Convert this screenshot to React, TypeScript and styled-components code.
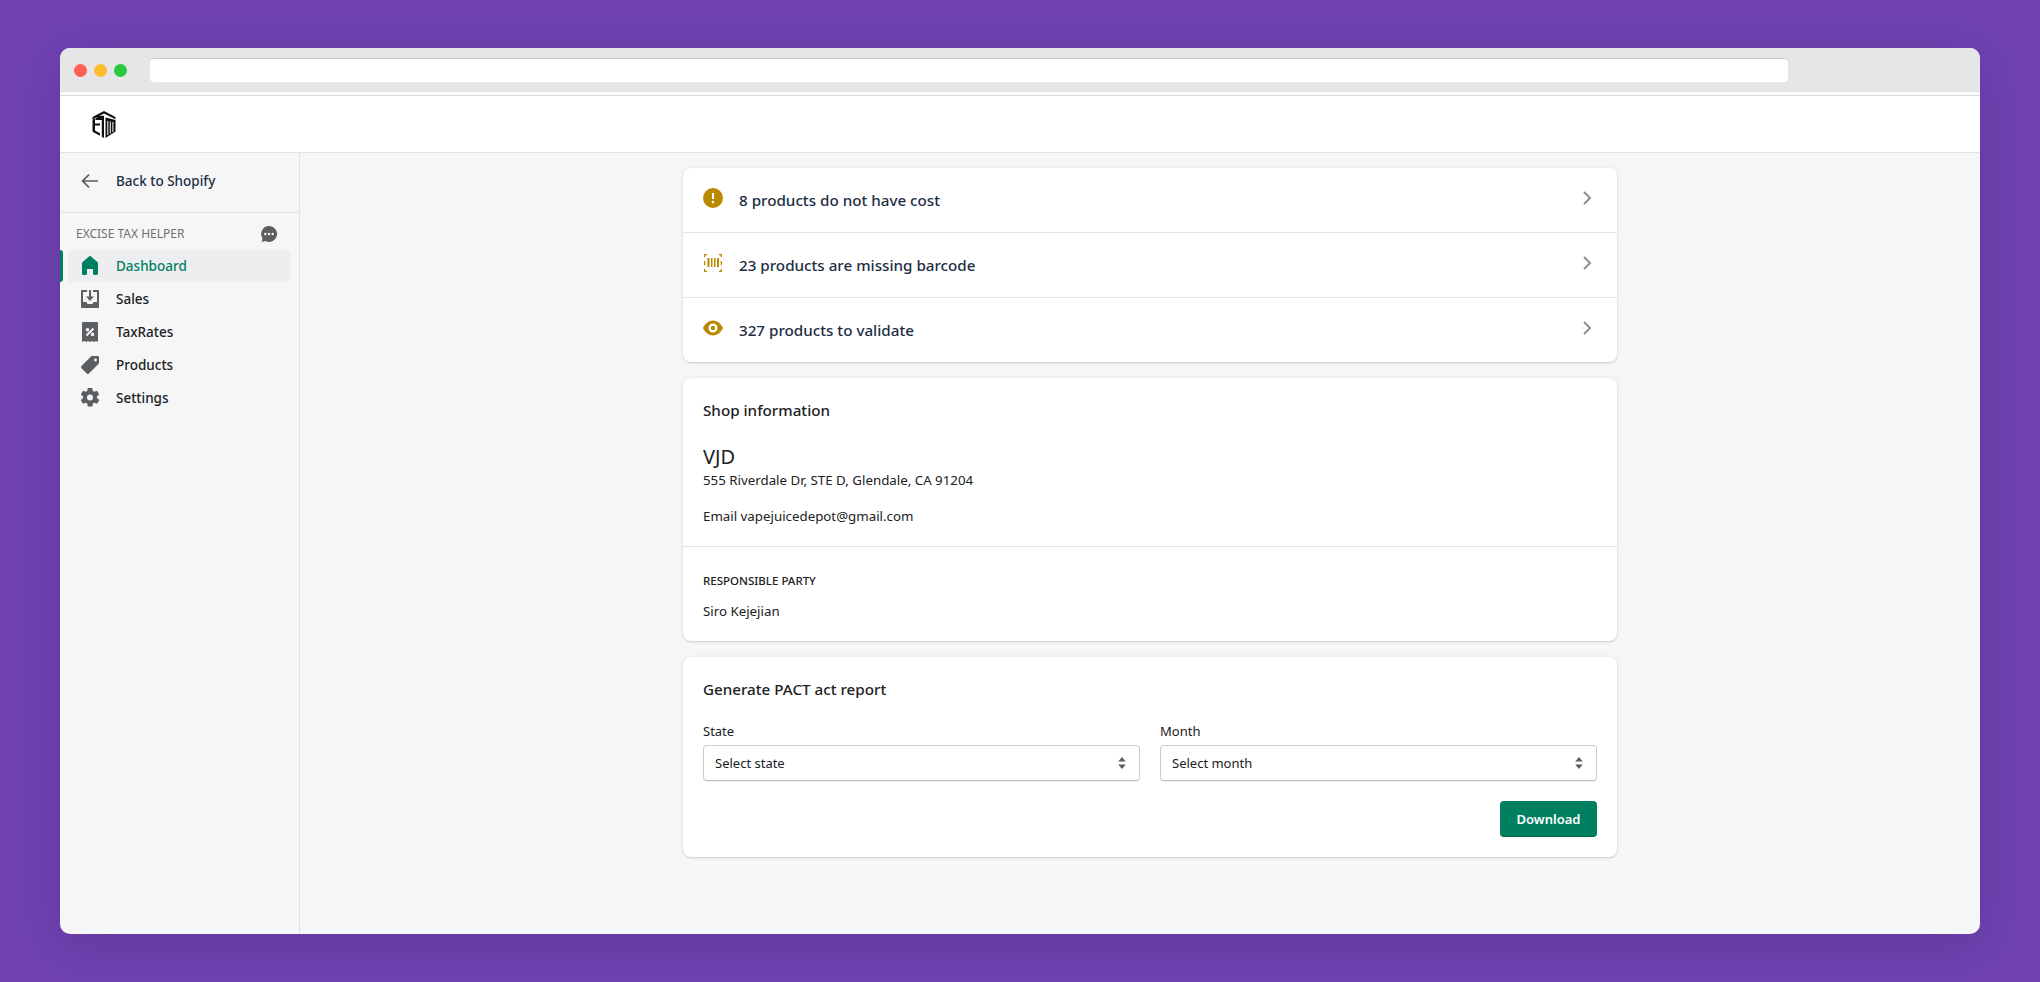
import React from "react";
import styled, { createGlobalStyle } from "styled-components";

const GlobalStyle = createGlobalStyle`
  * { box-sizing: border-box; }
  html, body { margin: 0; height: 100%; }
  body {
    background: #7043b1;
    font-family: "Noto Sans", "Open Sans", sans-serif;
    color: #212b36;
    overflow: hidden;
  }
`;

const Page = styled.div`
  height: 982px;
  padding: 48px 60px;
`;

const Browser = styled.div`
  height: 886px;
  border-radius: 10px;
  overflow: hidden;
  background: #f6f6f7;
  display: flex;
  flex-direction: column;
  box-shadow: 0 10px 50px rgba(40, 20, 80, 0.22);
`;

const ChromeBar = styled.div`
  height: 44px;
  flex-shrink: 0;
  background: #e6e6e6;
  display: flex;
  align-items: center;
  padding: 0 13px 0 14px;
`;

const Dots = styled.div`
  display: flex;
  gap: 7px;
  margin-right: 23px;
`;

const Dot = styled.span<{ $color: string }>`
  width: 13px;
  height: 13px;
  border-radius: 50%;
  background: ${(p) => p.$color};
`;

const Address = styled.div`
  width: 1638px;
  height: 24px;
  margin-top: -1px;
  background: #fff;
  border-radius: 4px;
  border-top: 1px solid #c9c9c9;
`;

const TopBar = styled.header`
  height: 61px;
  flex-shrink: 0;
  background: #fff;
  padding-top: 5px;
  padding-left: 32px;
  display: flex;
  align-items: center;
  border-bottom: 1px solid #dfe3e8;
  position: relative;
  &::before {
    content: "";
    position: absolute;
    left: 0;
    right: 0;
    top: 3px;
    height: 1px;
    background: #dcdcdc;
  }
`;

const Body = styled.div`
  flex: 1;
  display: flex;
  min-height: 0;
`;

const Sidebar = styled.nav`
  width: 240px;
  flex-shrink: 0;
  border-right: 1px solid #dfe3e8;
`;

const BackRow = styled.div`
  height: 60px;
  display: flex;
  align-items: center;
  padding: 0 0 4px 20px;
  gap: 16px;
  border-bottom: 1px solid #dfe3e8;
  font-size: 13.5px;
  font-weight: 500;
  color: #202e44;
`;

const SectionHead = styled.div`
  display: flex;
  align-items: center;
  justify-content: space-between;
  height: 21px;
  margin: 10px 0 6px;
  padding: 0 21px 0 16px;
  font-size: 12px;
  color: #6d7175;
  text-transform: uppercase;
`;

const NavList = styled.ul`
  list-style: none;
  margin: 0;
  padding: 0;
  display: flex;
  flex-direction: column;
  gap: 1px;
`;

const NavItem = styled.li<{ $active?: boolean }>`
  position: relative;
  height: 32px;
  margin: 0 8px;
  padding-left: 12px;
  gap: 16px;
  display: flex;
  align-items: center;
  border-radius: 3px;
  font-size: 13.5px;
  font-weight: 500;
  color: ${(p) => (p.$active ? "#008060" : "#202123")};
  background: ${(p) => (p.$active ? "#edeef0" : "transparent")};
  svg {
    flex-shrink: 0;
    fill: ${(p) => (p.$active ? "#008060" : "#5c5f62")};
  }
  &::before {
    content: "";
    display: ${(p) => (p.$active ? "block" : "none")};
    position: absolute;
    left: -8px;
    top: 0;
    width: 3px;
    height: 32px;
    background: #008060;
    border-radius: 0 3px 3px 0;
  }
`;

const Main = styled.main`
  flex: 1;
  padding: 15px 0 0 20px;
  display: flex;
  flex-direction: column;
  align-items: center;
  gap: 16px;
`;

const Card = styled.section`
  width: 934px;
  background: #fff;
  border-radius: 8px;
  box-shadow: 0 0 5px rgba(23, 24, 24, 0.05), 0 1px 2px rgba(0, 0, 0, 0.15);
`;

const IssueRow = styled.div`
  height: 64px;
  display: flex;
  align-items: center;
  padding: 0 20px;
  gap: 16px;
  font-size: 15.2px;
  font-weight: 500;
  color: #202e44;
  & + & {
    height: 65px;
    border-top: 1px solid #e1e3e5;
  }
  > svg:first-child {
    fill: #b98900;
    margin-top: -5px;
    flex-shrink: 0;
  }
`;

const IssueText = styled.span`
  flex: 1;
`;

const Chevron = styled.svg`
  fill: none;
  stroke: #8c9196;
  stroke-width: 2;
  margin-top: -4px;
`;

const Section = styled.div<{ $divided?: boolean }>`
  padding: 20px;
  border-top: ${(p) => (p.$divided ? "1px solid #e1e3e5" : "none")};
`;

const CardTitle = styled.h2`
  margin: 0;
  font-size: 15.2px;
  font-weight: 500;
  line-height: 24px;
  color: #202123;
`;

const ShopName = styled.div`
  margin-top: 22px;
  font-size: 20px;
  line-height: 26px;
  color: #202123;
`;

const Line = styled.p<{ $gap?: number }>`
  margin: ${(p) => p.$gap ?? 0}px 0 0;
  font-size: 13.3px;
  line-height: 20px;
  color: #202123;
`;

const Subheading = styled.h3`
  margin: 6px 0 12px;
  font-size: 11.5px;
  line-height: 16px;
  font-weight: 500;
  color: #202123;
  text-transform: uppercase;
`;

const FieldGrid = styled.div`
  display: grid;
  grid-template-columns: 1fr 1fr;
  gap: 20px;
  margin-top: 20px;
`;

const Field = styled.div`
  display: flex;
  flex-direction: column;
  gap: 4px;
`;

const FieldLabel = styled.label`
  font-size: 13px;
  line-height: 20px;
  color: #202123;
`;

const SelectBox = styled.div`
  height: 36px;
  display: flex;
  align-items: center;
  justify-content: space-between;
  padding: 0 11px 0 11px;
  border: 1px solid #c4cdd5;
  border-bottom-color: #babfc3;
  border-radius: 4px;
  font-size: 13px;
  color: #202123;
  box-shadow: 0 1px 0 rgba(0, 0, 0, 0.05);
  svg {
    fill: #5c5f62;
  }
`;

const Actions = styled.div`
  display: flex;
  justify-content: flex-end;
  margin-top: 20px;
`;

const PrimaryButton = styled.button`
  width: 97px;
  height: 36px;
  border: 0;
  border-bottom: 1px solid #006e52;
  border-radius: 4px;
  background: #008060;
  color: #fff;
  font-family: inherit;
  font-size: 13px;
  font-weight: 600;
`;

const Logo = () => (
  <svg width="24" height="28" viewBox="0 0 24 28" fill="#111">
    <path d="M12 0 23.500 6v2.200L12 2.600.5 8.200V6z" />
    <path d="M.5 8.500 3 7.300v5.200h5v2H3V19.600l5 2.700v2.500l-7.500-4z" />
    <path d="M3.500 7h6.700v2H3.500z" />
    <path d="M4.500 4.800h7.500V27l-2.200-1.200V7H4.500z" />
    <path d="M13.500 6.500 23.500 9v11.500L13.500 27z" />
    <path d="M15.800 10v14M18.300 10.500v12M20.900 11v10" stroke="#fff" strokeWidth="1" fill="none" />
  </svg>
);

const BackIcon = () => (
  <svg width="20" height="20" viewBox="0 0 20 20" fill="none" stroke="#5c5f62" strokeWidth="1.7">
    <path d="M18 10H3M9 3.600 2.600 10 9 16.400" />
  </svg>
);

const ChatIcon = () => (
  <svg width="18" height="18" viewBox="0 0 18 18" fill="#5c5f62">
    <path d="M9 1a8 8 0 1 1-3.600 15.100L1.600 17l.9-3.600A8 8 0 0 1 9 1z" />
    <circle cx="5.300" cy="9" r="1.200" fill="#f6f6f7" />
    <circle cx="9" cy="9" r="1.200" fill="#f6f6f7" />
    <circle cx="12.700" cy="9" r="1.200" fill="#f6f6f7" />
  </svg>
);

const HomeIcon = () => (
  <svg width="20" height="20" viewBox="0 0 20 20">
    <path d="M18 7.261V17.500c0 .841-.672 1.500-1.500 1.500h-2c-.828 0-1.500-.659-1.500-1.500V13H7v4.477C7 18.318 6.328 19 5.500 19h-2C2.672 19 2 18.318 2 17.477V7.261c0-.48.226-.93.593-1.240l6.700-5.665a1.010 1.010 0 0 1 1.414 0l6.700 5.665c.367.31.593.76.593 1.240z" />
  </svg>
);

const SalesIcon = () => (
  <svg width="20" height="20" viewBox="0 0 20 20">
    <path d="M2 1h5v2H3v10h3.500l1 2h5l1-2H17V3h-4V1h5a1 1 0 0 1 1 1v16a1 1 0 0 1-1 1H2a1 1 0 0 1-1-1V2a1 1 0 0 1 1-1z" />
    <path d="M9 1h2v6.500h3L10 12 6 7.500h3z" />
  </svg>
);

const TaxIcon = () => (
  <svg width="20" height="20" viewBox="0 0 20 20">
    <path d="M3 0h14a1 1 0 0 1 1 1v19l-2-1-2 1-2-1-2 1-2-1-2 1-2-1-2 1V1a1 1 0 0 1 1-1z" />
    <path d="M12.800 5.800l1.400 1.400-7 7-1.400-1.400zM7.500 9.500a1.800 1.800 0 1 1 0-3.600 1.800 1.800 0 0 1 0 3.600zM12.500 14.200a1.800 1.800 0 1 1 0-3.600 1.800 1.800 0 0 1 0 3.600z" fill="#f6f6f7" />
  </svg>
);

const TagIcon = () => (
  <svg width="20" height="20" viewBox="0 0 20 20">
    <path fillRule="evenodd" d="M12 1h6a1 1 0 0 1 1 1v6a1 1 0 0 1-.3.7l-9.800 9.800a1.500 1.500 0 0 1-2.100 0L1.500 13.200a1.500 1.500 0 0 1 0-2.100L11.300 1.300A1 1 0 0 1 12 1zm3.500 2.600a1.400 1.400 0 1 0 0 2.800 1.400 1.400 0 0 0 0-2.800z" />
  </svg>
);

const GearIcon = () => (
  <svg width="20" height="20" viewBox="0 0 20 20">
    <path fillRule="evenodd" d="M7.800 0h4.400l.6 3 1.300.7 2.900-1 2.200 3.800-2.300 2 .1 1.500 2.300 2-2.200 3.800-2.900-1-1.300.8-.6 3H7.800l-.6-3-1.300-.8-2.900 1L.8 12l2.300-2V8.500l-2.300-2L3 2.700l2.900 1 1.300-.7zM10 6.500a3 3 0 1 0 0 6 3 3 0 0 0 0-6z" />
  </svg>
);

const AlertIcon = () => (
  <svg width="20" height="20" viewBox="0 0 20 20">
    <path fillRule="evenodd" d="M10 0a10 10 0 1 1 0 20 10 10 0 0 1 0-20zM9 5v6h2V5zm1 7.800a1.300 1.300 0 1 0 0 2.600 1.300 1.300 0 0 0 0-2.600z" />
  </svg>
);

const BarcodeIcon = () => (
  <svg width="20" height="20" viewBox="0 0 20 20">
    <path d="M1 1h3v1.300H2.300V4H1zM16 1h3v3h-1.300V2.300H16zM1 16h1.300v1.700H4V19H1zM17.700 16H19v3h-3v-1.300h1.700zM1 8h1.300v4H1zM17.700 8H19v4h-1.300zM4.500 5h2v9h-2zM8 5h1.500v9H8zM11 5h1.500v9H11zM14 5h2v9h-2z" />
  </svg>
);

const EyeIcon = () => (
  <svg width="20" height="20" viewBox="0 0 20 20">
    <path fillRule="evenodd" d="M10 2.500c5 0 8.700 4.200 10 7.500-1.300 3.300-5 7.500-10 7.500S1.300 13.300 0 10c1.300-3.300 5-7.500 10-7.500zm0 3a4.500 4.500 0 1 0 0 9 4.500 4.500 0 0 0 0-9zm0 2.300a2.200 2.200 0 1 1 0 4.400 2.200 2.200 0 0 1 0-4.400z" />
  </svg>
);

const ChevronIcon = () => (
  <Chevron width="20" height="20" viewBox="0 0 20 20">
    <path d="M7 4l6 6-6 6" />
  </Chevron>
);

const UpDownIcon = () => (
  <svg width="12" height="16" viewBox="0 0 12 16">
    <path d="M6 2l3.800 4.500H2.200zM6 14l-3.800-4.500h7.600z" />
  </svg>
);

const navItems = [
  { label: "Dashboard", icon: <HomeIcon />, active: true },
  { label: "Sales", icon: <SalesIcon /> },
  { label: "TaxRates", icon: <TaxIcon /> },
  { label: "Products", icon: <TagIcon /> },
  { label: "Settings", icon: <GearIcon /> },
];

const issues = [
  { label: "8 products do not have cost", icon: <AlertIcon /> },
  { label: "23 products are missing barcode", icon: <BarcodeIcon /> },
  { label: "327 products to validate", icon: <EyeIcon /> },
];

function App() {
  return (
    <Page>
      <GlobalStyle />
      <Browser>
        <ChromeBar>
          <Dots>
            <Dot $color="#ff5f57" />
            <Dot $color="#febc2e" />
            <Dot $color="#28c840" />
          </Dots>
          <Address />
        </ChromeBar>
        <TopBar>
          <Logo />
        </TopBar>
        <Body>
          <Sidebar>
            <BackRow>
              <BackIcon />
              Back to Shopify
            </BackRow>
            <SectionHead>
              Excise Tax Helper
              <ChatIcon />
            </SectionHead>
            <NavList>
              {navItems.map((item) => (
                <NavItem key={item.label} $active={item.active}>
                  {item.icon}
                  {item.label}
                </NavItem>
              ))}
            </NavList>
          </Sidebar>
          <Main>
            <Card>
              {issues.map((issue) => (
                <IssueRow key={issue.label}>
                  {issue.icon}
                  <IssueText>{issue.label}</IssueText>
                  <ChevronIcon />
                </IssueRow>
              ))}
            </Card>
            <Card>
              <Section>
                <CardTitle>Shop information</CardTitle>
                <ShopName>VJD</ShopName>
                <Line>555 Riverdale Dr, STE D, Glendale, CA 91204</Line>
                <Line $gap={16}>Email vapejuicedepot@gmail.com</Line>
              </Section>
              <Section $divided>
                <Subheading>Responsible party</Subheading>
                <Line>Siro Kejejian</Line>
              </Section>
            </Card>
            <Card>
              <Section>
                <CardTitle>Generate PACT act report</CardTitle>
                <FieldGrid>
                  <Field>
                    <FieldLabel>State</FieldLabel>
                    <SelectBox>
                      Select state
                      <UpDownIcon />
                    </SelectBox>
                  </Field>
                  <Field>
                    <FieldLabel>Month</FieldLabel>
                    <SelectBox>
                      Select month
                      <UpDownIcon />
                    </SelectBox>
                  </Field>
                </FieldGrid>
                <Actions>
                  <PrimaryButton>Download</PrimaryButton>
                </Actions>
              </Section>
            </Card>
          </Main>
        </Body>
      </Browser>
    </Page>
  );
}

export default App;
